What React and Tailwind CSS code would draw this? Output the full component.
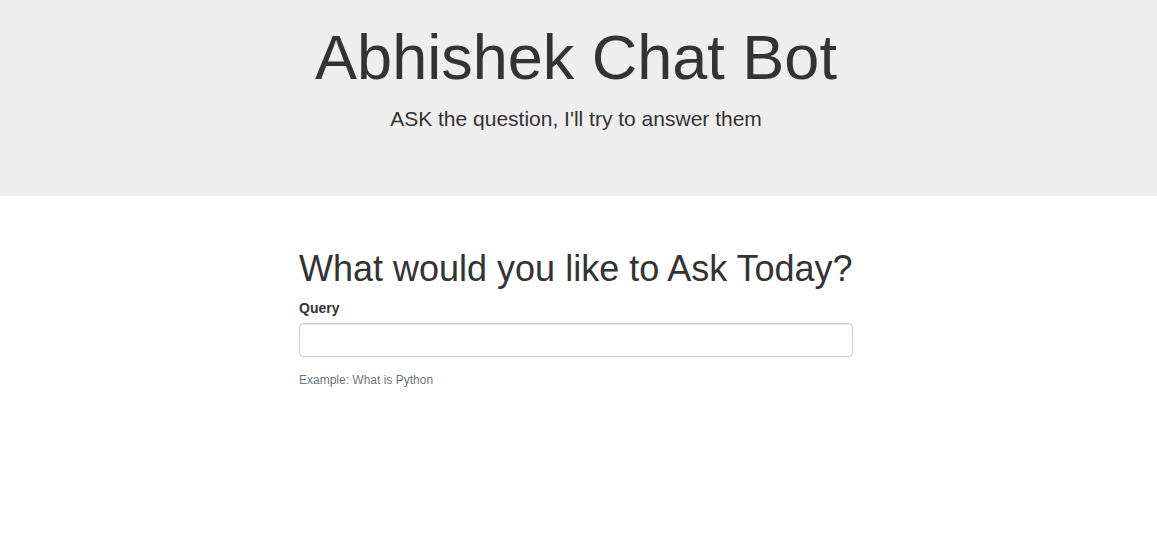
export default function App() {
  return (
    <div className="min-h-[557px] bg-white text-[#333] font-['Liberation_Sans',Arial,sans-serif]">
      {/* Jumbotron */}
      <header className="bg-[#eeeeee] pt-[23px] pb-[47px] pr-[5px] text-center">
        <h1 className="text-[63px] leading-[1.1] mb-[12px]">Abhishek Chat Bot</h1>
        <p className="text-[21px] leading-[30px] mb-[15px]">ASK the question, I'll try to answer them</p>
      </header>

      {/* Query form */}
      <main className="pr-[5px]">
        <div className="mx-auto w-[554px] pt-[53px]">
          <h2 className="text-[36px] leading-[1.1] mb-[7px]">What would you like to Ask Today?</h2>
          <form onSubmit={(e) => e.preventDefault()}>
            <label htmlFor="query" className="inline-block text-[14px] leading-[20px] font-bold mb-[5px]">
              Query
            </label>
            <input
              id="query"
              type="text"
              className="block w-full h-[34px] px-3 text-[14px] border border-[#cccccc] rounded-[4px] shadow-[inset_0_1px_1px_rgba(0,0,0,0.075)] outline-none"
            />
            <small className="block mt-[14px] text-[12px] leading-[18px] text-[#6c757d]">
              Example: What is Python
            </small>
          </form>
        </div>
      </main>
    </div>
  );
}
